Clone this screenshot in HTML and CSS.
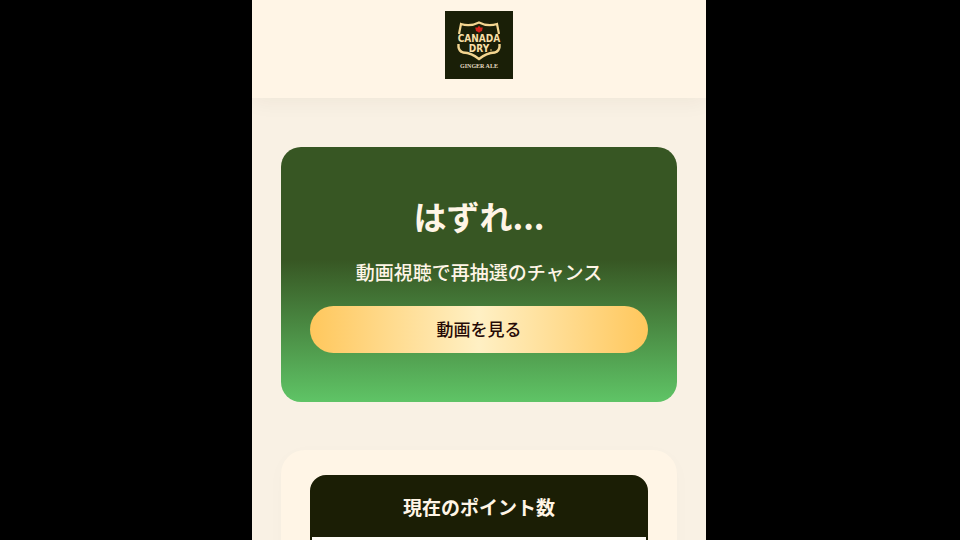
FILE: index.html
```html
<!DOCTYPE html>
<html lang="ja">
<head>
<meta charset="UTF-8">
<meta name="viewport" content="width=device-width, initial-scale=1.0">
<title>カナダドライ キャンペーン</title>
<link rel="stylesheet" href="styles.css">
</head>
<body>

<div class="app">
    <header class="header">
        <svg class="logo" viewBox="0 0 68 68" role="img" aria-label="Canada Dry Ginger Ale">
            <rect width="68" height="68" fill="#1a1f07"/>
            <path d="M14 23 L16 13 Q25 16 34 11.500 Q43 16 52 13 L54 23" fill="none" stroke="#f3d590" stroke-width="2.200"/>
            <path d="M13.500 33 V36 Q14 40 18 41.500 Q27 42 34 48 Q41 42 50 41.500 Q54 40 54.500 36 V33" fill="none" stroke="#f3d590" stroke-width="2.400"/>
            <path d="M34 14.500 L35.300 16.500 L37.800 16.500 L37 20 L34.800 21 L34 22 L33.200 21 L31 20 L30.200 16.500 L32.700 16.500 Z" fill="#d8231c"/>
            <text class="logo-name" x="34" y="31" text-anchor="middle">CANADA</text>
            <text class="logo-name" x="34" y="41" text-anchor="middle">DRY</text>
            <circle cx="46" cy="39" r="1" fill="#a08a50"/>
            <text class="logo-sub" x="34" y="57" text-anchor="middle">GINGER ALE</text>
        </svg>
    </header>

    <main class="content">
        <section class="result">
            <h1>はずれ...</h1>
            <p>動画視聴で再抽選のチャンス</p>
            <button type="button" class="btn-video">動画を見る</button>
        </section>

        <section class="card">
            <div class="points">
                <h2>現在のポイント数</h2>
                <div class="points-body"></div>
            </div>
        </section>
    </main>
</div>

</body>
</html>
```

FILE: styles.css
```css
body {
    margin: 0;
    padding-right: 2px;
    background-color: #000;
    font-family: "Noto Sans CJK JP", sans-serif;
}
.app {
    max-width: 454px;
    height: 100vh;
    margin: 0 auto;
    overflow: hidden;
    background-color: #f9f1e4;
}

/* ヘッダー */
.header {
    display: flex;
    justify-content: center;
    padding: 11px 0 19px;
    background-color: #fff5e6;
    box-shadow: 0 4px 20px rgba(60, 40, 10, 0.05);
}
.logo {
    display: block;
    width: 68px;
    height: 68px;
}
.logo-name {
    font-family: "DejaVu Sans Condensed", "DejaVu Sans", sans-serif;
    font-size: 10px;
    font-weight: bold;
    fill: #f8dfa6;
}
.logo-sub {
    font-family: "Liberation Serif", serif;
    font-size: 6px;
    font-weight: bold;
    fill: #e6dcc4;
}
.content {
    display: grid;
    gap: 48px;
    padding: 49px 29px;
}

/* 抽選結果 */
.result {
    padding: 44px 29px 49px;
    border-radius: 20px;
    background: linear-gradient(#375623 0%, #375623 44%, #5fc466 100%);
    color: #fff5e6;
    text-align: center;
}
.result h1 {
    margin: 0;
    font-size: 33px;
    font-weight: bold;
    line-height: 50px;
}
.result p {
    margin: 16px 0 20px;
    font-size: 19px;
    font-weight: 500;
    line-height: 29px;
}
.btn-video {
    display: block;
    width: 100%;
    padding: 10px 12px 12px;
    border: none;
    border-radius: 24px;
    background: linear-gradient(90deg, #ffc75c, #fff0c4 50%, #ffc75c);
    color: #260a05;
    font-family: inherit;
    font-size: 17px;
    font-weight: 500;
    line-height: 25px;
    cursor: pointer;
}

/* ポイント */
.card {
    padding: 25px 29px;
    border-radius: 24px;
    background-color: #fff5e6;
    box-shadow: 0 4px 20px rgba(60, 40, 10, 0.02);
}
.points {
    border: 2px solid #1b1e05;
    border-radius: 16px;
    background-color: #1b1e05;
    overflow: hidden;
}
.points h2 {
    margin: 0;
    padding: 16px;
    color: #fff5e6;
    font-size: 19px;
    font-weight: bold;
    line-height: 28px;
    text-align: center;
}
.points-body {
    min-height: 96px;
    background-color: #fffdf8;
}
```
